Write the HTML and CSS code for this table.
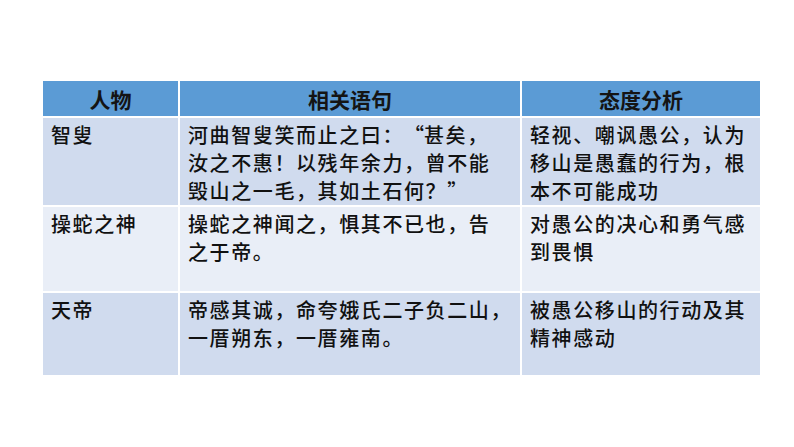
FILE: index.html
```html
<!DOCTYPE html>
<html lang="zh">
<head>
<meta charset="utf-8">
<link rel="stylesheet" href="styles.css">
</head>
<body>
<div class="page">
  <table class="grid">
    <colgroup>
      <col class="c1"><col class="c2"><col class="c3">
    </colgroup>
    <thead>
      <tr class="head"><th>人物</th><th>相关语句</th><th>态度分析</th></tr>
    </thead>
    <tbody>
      <tr class="r1 dark">
        <td>智叟</td>
        <td>河曲智叟笑而止之曰：<span class="q-open">“</span>甚矣，<br>汝之不惠！以残年余力，曾不能<br>毁山之一毛，其如土石何？<span class="q-close">”</span></td>
        <td>轻视、嘲讽愚公，认为<br>移山是愚蠢的行为，根<br>本不可能成功</td>
      </tr>
      <tr class="r2 light">
        <td>操蛇之神</td>
        <td>操蛇之神闻之，惧其不已也，告<br>之于帝。</td>
        <td>对愚公的决心和勇气感<br>到畏惧</td>
      </tr>
      <tr class="r3 dark">
        <td>天帝</td>
        <td>帝感其诚，命夸娥氏二子负二山，<br>一厝朔东，一厝雍南。</td>
        <td>被愚公移山的行动及其<br>精神感动</td>
      </tr>
    </tbody>
  </table>
</div>
</body>
</html>
```

FILE: styles.css
```css
html, body {
  margin: 0;
  padding: 0;
  background: #ffffff;
}
.page {
  width: 794px;
  height: 447px;
  padding: 79px 0 0 41px;
  box-sizing: border-box;
}
.grid {
  border-collapse: collapse;
  table-layout: fixed;
  width: 719px;
  font-family: "Noto Sans CJK SC", sans-serif;
  color: #111111;
}
.c1 { width: 137px; }
.c2 { width: 342px; }
.c3 { width: 240px; }
.grid th, .grid td {
  border: 2px solid #ffffff;
  box-sizing: border-box;
}
.head th {
  background: #5b9bd5;
  height: 37px;
  font-size: 21px;
  font-weight: 700;
  text-align: center;
  padding: 0;
  line-height: 24px;
  color: #141414;
}
.grid td {
  vertical-align: top;
  text-align: left;
  font-size: 20px;
  line-height: 28px;
  letter-spacing: 1.6px;
  padding: 3px 0 0 8px;
  font-weight: 500;
  white-space: nowrap;
}
.q-open, .q-close {
  display: inline-block;
  width: 1em;
}
.q-open { text-align: right; }
.q-close { text-align: left; }
.dark td { background: #d0dbee; }
.light td { background: #e9eef7; }
.r1 td { height: 87px; }
.r2 td { height: 86px; }
.r3 td { height: 84px; }
```
